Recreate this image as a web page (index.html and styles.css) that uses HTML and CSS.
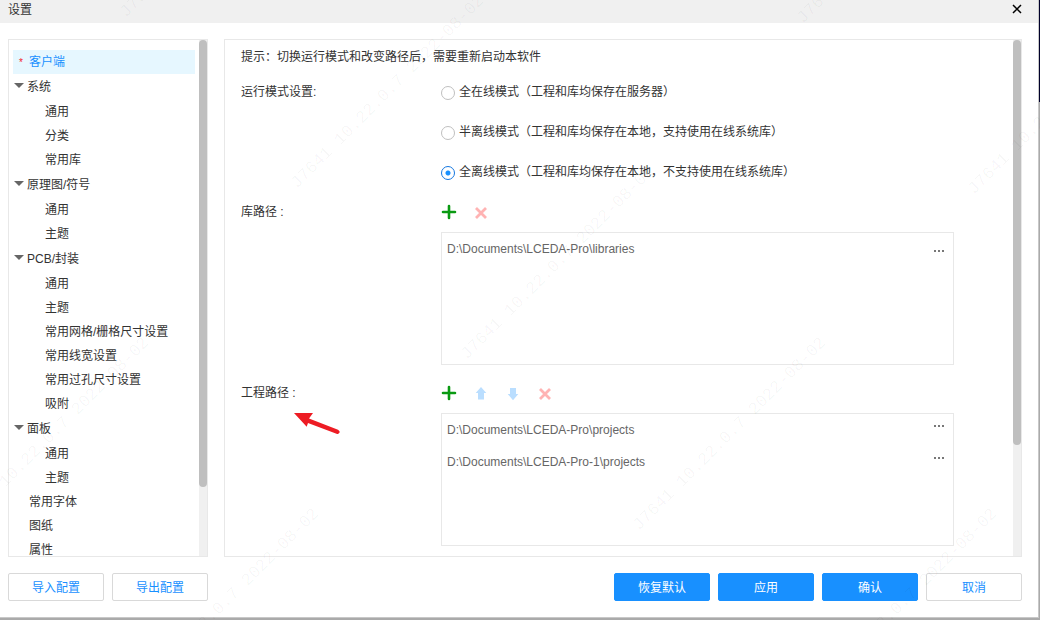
FILE: index.html
```html
<!DOCTYPE html>
<html lang="zh-CN">
<head>
<meta charset="utf-8">
<title>设置</title>
<link rel="stylesheet" href="styles.css">
</head>
<body>
<div class="desktop">
  <div class="window">
    <header class="titlebar">
      <h1 class="title">设置</h1>
      <button class="close" type="button" aria-label="关闭">
        <svg width="10" height="10" viewBox="0 0 10 10"><path d="M1 1l8 8M9 1L1 9" stroke="#000" stroke-width="1.5"/></svg>
      </button>
    </header>

    <div class="panels">
      <nav class="panel sidebar" aria-label="设置分类">
        <ul class="tree">
          <li><a class="leaf top selected" href="#client"><span class="star">*</span>客户端</a></li>
          <li><button class="group" type="button"><span class="caret"></span>系统</button>
            <ul>
              <li><a class="leaf" href="#s1">通用</a></li>
              <li><a class="leaf" href="#s2">分类</a></li>
              <li><a class="leaf" href="#s3">常用库</a></li>
            </ul>
          </li>
          <li><button class="group" type="button"><span class="caret"></span>原理图/符号</button>
            <ul>
              <li><a class="leaf" href="#y1">通用</a></li>
              <li><a class="leaf" href="#y2">主题</a></li>
            </ul>
          </li>
          <li><button class="group" type="button"><span class="caret"></span>PCB/封装</button>
            <ul>
              <li><a class="leaf" href="#p1">通用</a></li>
              <li><a class="leaf" href="#p2">主题</a></li>
              <li><a class="leaf" href="#p3">常用网格/栅格尺寸设置</a></li>
              <li><a class="leaf" href="#p4">常用线宽设置</a></li>
              <li><a class="leaf" href="#p5">常用过孔尺寸设置</a></li>
              <li><a class="leaf" href="#p6">吸附</a></li>
            </ul>
          </li>
          <li><button class="group" type="button"><span class="caret"></span>面板</button>
            <ul>
              <li><a class="leaf" href="#m1">通用</a></li>
              <li><a class="leaf" href="#m2">主题</a></li>
            </ul>
          </li>
          <li><a class="leaf top" href="#font">常用字体</a></li>
          <li><a class="leaf top" href="#sheet">图纸</a></li>
          <li><a class="leaf top" href="#attr">属性</a></li>
        </ul>
        <div class="track"><div class="thumb thumb-tree"></div></div>
      </nav>

      <main class="panel content">
        <form class="form">
          <p class="tip">提示：切换运行模式和改变路径后，需要重新启动本软件</p>

          <span class="label" id="mode-label">运行模式设置:</span>
          <div class="modes" role="radiogroup" aria-labelledby="mode-label">
            <label class="mode"><input class="radio" type="radio" name="mode">全在线模式（工程和库均保存在服务器）</label>
            <label class="mode"><input class="radio" type="radio" name="mode">半离线模式（工程和库均保存在本地，支持使用在线系统库）</label>
            <label class="mode"><input class="radio" type="radio" name="mode" checked>全离线模式（工程和库均保存在本地，不支持使用在线系统库）</label>
          </div>

          <span class="label">库路径 :</span>
          <div class="paths">
            <div class="tools">
              <button class="tool" type="button" aria-label="添加"><svg width="16" height="16" viewBox="0 0 16 16"><path d="M8 2v12M2 8h12" stroke="#0a9a12" stroke-width="2.6" stroke-linecap="round"/></svg></button>
              <button class="tool" type="button" aria-label="删除"><svg width="16" height="16" viewBox="0 0 16 16"><path d="M3 4l10 10M13 4l-10 10" stroke="#ffb3b3" stroke-width="2.8"/></svg></button>
            </div>
            <ul class="list list-libraries">
              <li class="path">D:\Documents\LCEDA-Pro\libraries
                <button class="more" type="button" aria-label="更多"><svg width="12" height="2" viewBox="0 0 12 2"><path d="M1 0h2v2H1zM5 0h2v2H5zM9 0h2v2H9z" fill="#777"/></svg></button></li>
            </ul>
          </div>

          <span class="label marked">工程路径 :
            <svg class="arrow" width="48" height="24" viewBox="0 0 48 24"><path d="M0 1H19L15 6.500L44 17.700Q46.400 19 45.500 20.800Q44.500 22.500 42.500 21.700L14 11L12.700 14.700Z" fill="#ed1c24"/></svg>
          </span>
          <div class="paths">
            <div class="tools">
              <button class="tool" type="button" aria-label="添加"><svg width="16" height="16" viewBox="0 0 16 16"><path d="M8 2v12M2 8h12" stroke="#0a9a12" stroke-width="2.6" stroke-linecap="round"/></svg></button>
              <button class="tool" type="button" aria-label="上移"><svg width="16" height="16" viewBox="0 0 16 16"><path d="M8 2L13.300 8H11V14.500H5V8H2.700Z" fill="#badeff"/></svg></button>
              <button class="tool" type="button" aria-label="下移"><svg width="16" height="16" viewBox="0 0 16 16"><path d="M8 15.200L13.300 9H11V3H5V9H2.700Z" fill="#badeff"/></svg></button>
              <button class="tool" type="button" aria-label="删除"><svg width="16" height="16" viewBox="0 0 16 16"><path d="M3 4l10 10M13 4l-10 10" stroke="#ffb3b3" stroke-width="2.8"/></svg></button>
            </div>
            <ul class="list list-projects">
              <li class="path">D:\Documents\LCEDA-Pro\projects
                <button class="more" type="button" aria-label="更多"><svg width="12" height="2" viewBox="0 0 12 2"><path d="M1 0h2v2H1zM5 0h2v2H5zM9 0h2v2H9z" fill="#777"/></svg></button></li>
              <li class="path">D:\Documents\LCEDA-Pro-1\projects
                <button class="more" type="button" aria-label="更多"><svg width="12" height="2" viewBox="0 0 12 2"><path d="M1 0h2v2H1zM5 0h2v2H5zM9 0h2v2H9z" fill="#777"/></svg></button></li>
            </ul>
          </div>
        </form>
        <div class="track"><div class="thumb thumb-form"></div></div>
      </main>
    </div>

    <footer class="footer">
      <button class="btn" type="button">导入配置</button>
      <button class="btn" type="button">导出配置</button>
      <span class="spacer"></span>
      <button class="btn primary" type="button">恢复默认</button>
      <button class="btn primary" type="button">应用</button>
      <button class="btn primary" type="button">确认</button>
      <button class="btn" type="button">取消</button>
    </footer>
  </div>

  <svg class="watermark" aria-hidden="true">
    <g>
      <text transform="translate(126 18) rotate(-45)">J7641 10.22.0.7 2022-08-02</text>
      <text transform="translate(297 189) rotate(-45)">J7641 10.22.0.7 2022-08-02</text>
      <text transform="translate(467 360) rotate(-45)">J7641 10.22.0.7 2022-08-02</text>
      <text transform="translate(639 531) rotate(-45)">J7641 10.22.0.7 2022-08-02</text>
      <text transform="translate(803 24) rotate(-45)">J7641 10.22.0.7 2022-08-02</text>
      <text transform="translate(974 195) rotate(-45)">J7641 10.22.0.7 2022-08-02</text>
      <text transform="translate(-38 531) rotate(-45)">J7641 10.22.0.7 2022-08-02</text>
      <text transform="translate(132 702) rotate(-45)">J7641 10.22.0.7 2022-08-02</text>
      <text transform="translate(810 702) rotate(-45)">J7641 10.22.0.7 2022-08-02</text>
    </g>
  </svg>
</div>
</body>
</html>
```

FILE: styles.css
```css
* { box-sizing: border-box; }

body {
  margin: 0;
  font: 12px/16px "Liberation Sans", "Noto Sans CJK SC", sans-serif;
  color: #333;
}

ul { list-style: none; margin: 0; padding: 0; }
button { font: inherit; color: inherit; border: 0; background: none; padding: 0; cursor: pointer; }
svg { display: block; }

.desktop {
  position: relative;
  height: 100vh;
  padding: 0 1px 2px 0;
  overflow: hidden;
  background: linear-gradient(#00002a 102px, #aaa 102px);
}

.window {
  display: flex;
  flex-direction: column;
  height: 100%;
  background: #fff;
  border: solid #c8c8c8;
  border-width: 0 1px 1px 0;
}

.titlebar {
  display: flex;
  justify-content: space-between;
  align-items: flex-start;
  height: 23px;
  padding: 2px 16px 0 8px;
  background: #f0f0f0;
}
.title { margin: 0; font-size: 12px; font-weight: 400; }
.close { padding: 2px 0; }

.panels {
  display: flex;
  flex: 1;
  gap: 16px;
  min-height: 0;
  padding: 16px 16px 16px 8px;
}
.panel {
  display: flex;
  min-height: 0;
  overflow: hidden;
  border: 1px solid #e8e8e8;
}
.sidebar { flex: 0 0 200px; }
.content { flex: 1; }

.track { flex: 0 0 8px; background: #f0f0f0; }
.thumb { border-radius: 4px; background: #bfbfbf; }
.thumb-tree { height: 86.6%; }
.thumb-form { height: 78.5%; }

.tree { flex: 1; padding: 10px 4px 0; }
.leaf {
  display: block;
  height: 24px;
  padding-left: 32px;
  line-height: 24px;
  color: #333;
  text-decoration: none;
}
.leaf.top { display: flex; padding-left: 16px; }
.leaf.selected { padding-left: 6px; background: #e6f7ff; color: #1890ff; }
.star { width: 10px; font-size: 10px; line-height: 26px; color: #f5222d; }
.group { display: flex; align-items: center; width: 100%; height: 26px; }
.caret {
  margin: 0 3px 3px 1px;
  border: 5px solid transparent;
  border-top-color: #666;
  border-bottom: 0;
}

.form {
  display: grid;
  flex: 1;
  grid-template-columns: 200px 1fr;
  align-content: start;
  row-gap: 8px;
  padding: 0 59px 0 16px;
}
.tip { grid-column: 1 / -1; margin: 0 0 -10px; line-height: 34px; }
.label { line-height: 40px; }
.modes { margin-bottom: -8px; }
.mode { display: flex; align-items: center; gap: 4px; height: 40px; }
.radio {
  appearance: none;
  width: 14px;
  height: 14px;
  margin: 2px 0 0;
  border: 1px solid #bfbfbf;
  border-radius: 50%;
  background: #fff;
}
.radio:checked {
  border-color: #1577e0;
  background: radial-gradient(circle, #1890ff 2px, #fff 3px);
}

.tools { display: flex; gap: 16px; align-items: center; height: 40px; }
.list { height: 133px; border: 1px solid #e8e8e8; color: #666; }
.path {
  display: flex;
  justify-content: space-between;
  height: 32px;
  padding: 0 8px 0 5px;
  line-height: 32px;
}
.more { display: grid; place-items: center; height: 24px; }
.list-libraries .more { align-self: flex-end; margin-bottom: 2px; }

.marked { position: relative; }
.arrow { position: absolute; left: 53px; top: 39px; }

.footer { display: flex; gap: 8px; padding: 0 16px 16px 8px; }
.spacer { flex: 1; }
.btn {
  width: 96px;
  height: 28px;
  padding-top: 2px;
  border: 1px solid #d9d9d9;
  border-radius: 2px;
  background: #fff;
  color: #1890ff;
}
.btn.primary { border-color: #1890ff; background: #1890ff; color: #fff; }

.watermark {
  position: absolute;
  inset: 0;
  width: 100%;
  height: 100%;
  pointer-events: none;
  font: 17px "Liberation Mono", monospace;
  fill: #000;
  fill-opacity: 0.04;
}
```
